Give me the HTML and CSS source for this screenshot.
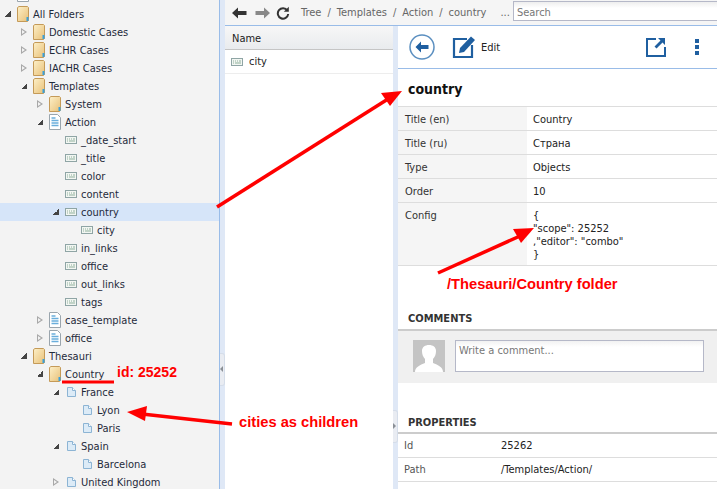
FILE: index.html
```html
<!DOCTYPE html>
<html lang="en">
<head>
    <meta charset="UTF-8">
    <title>Templates - country</title>
    <link rel="stylesheet" href="styles.css">
</head>
<body>
<svg class="defs" width="0" height="0">
    <defs>
        <linearGradient id="folderFill" x1="0" y1="0" x2="1" y2="1">
            <stop offset="0" stop-color="#fdf0c8"/>
            <stop offset="1" stop-color="#e8c078"/>
        </linearGradient>
        <symbol id="i-folder" viewBox="0 0 12 16">
            <path d="M.5 1.500 2 .5h8.500l1 1v13l-1 1H.5z" fill="url(#folderFill)" stroke="#c49a58"/>
            <path d="M10.500 11v4" stroke="#39a0dc" stroke-width="2"/>
        </symbol>
        <symbol id="i-form" viewBox="0 0 12 16">
            <path d="M.5.5h8l3 3v12H.5z" fill="#fff" stroke="#9aa5ad"/>
            <path d="M2.500 4h4M2.500 6.500h7M2.500 9h7M2.500 11.500h7" stroke="#6aaedc" stroke-width="1.400"/>
        </symbol>
        <symbol id="i-field" viewBox="0 0 12 8">
            <rect x=".5" y=".5" width="11" height="7" fill="#f2f6f2" stroke="#8fa5a5"/>
            <path d="M2 3h1M4 3h1M6 3h1M8 3h2M2 5h1M4 5h6" stroke="#8fb09c"/>
        </symbol>
        <symbol id="i-doc" viewBox="0 0 9 10">
            <path d="M.5.5h5l3 3v6H.5z" fill="#dcebf7" stroke="#8cb4d4"/>
            <path d="M5.500.5v3h3" fill="#fff" stroke="#8cb4d4"/>
        </symbol>
    </defs>
</svg>

<div class="app">
    <aside class="tree">
        <div class="row d0 cut"><span class="exp closed"></span><svg class="ico-form"><use href="#i-form"/></svg><span>Library</span></div>
        <div class="row d0"><span class="exp open"></span><svg class="ico-folder"><use href="#i-folder"/></svg><span>All Folders</span></div>
        <div class="row d1"><span class="exp closed"></span><svg class="ico-folder"><use href="#i-folder"/></svg><span>Domestic Cases</span></div>
        <div class="row d1"><span class="exp closed"></span><svg class="ico-folder"><use href="#i-folder"/></svg><span>ECHR Cases</span></div>
        <div class="row d1"><span class="exp closed"></span><svg class="ico-folder"><use href="#i-folder"/></svg><span>IACHR Cases</span></div>
        <div class="row d1"><span class="exp open"></span><svg class="ico-folder"><use href="#i-folder"/></svg><span>Templates</span></div>
        <div class="row d2"><span class="exp closed"></span><svg class="ico-folder"><use href="#i-folder"/></svg><span>System</span></div>
        <div class="row d2"><span class="exp open"></span><svg class="ico-form"><use href="#i-form"/></svg><span>Action</span></div>
        <div class="row d3"><span class="exp"></span><svg class="ico-field"><use href="#i-field"/></svg><span>_date_start</span></div>
        <div class="row d3"><span class="exp"></span><svg class="ico-field"><use href="#i-field"/></svg><span>_title</span></div>
        <div class="row d3"><span class="exp"></span><svg class="ico-field"><use href="#i-field"/></svg><span>color</span></div>
        <div class="row d3"><span class="exp"></span><svg class="ico-field"><use href="#i-field"/></svg><span>content</span></div>
        <div class="row d3 selected"><span class="exp open"></span><svg class="ico-field"><use href="#i-field"/></svg><span>country</span></div>
        <div class="row d4"><span class="exp"></span><svg class="ico-field"><use href="#i-field"/></svg><span>city</span></div>
        <div class="row d3"><span class="exp"></span><svg class="ico-field"><use href="#i-field"/></svg><span>in_links</span></div>
        <div class="row d3"><span class="exp"></span><svg class="ico-field"><use href="#i-field"/></svg><span>office</span></div>
        <div class="row d3"><span class="exp"></span><svg class="ico-field"><use href="#i-field"/></svg><span>out_links</span></div>
        <div class="row d3"><span class="exp"></span><svg class="ico-field"><use href="#i-field"/></svg><span>tags</span></div>
        <div class="row d2"><span class="exp closed"></span><svg class="ico-form"><use href="#i-form"/></svg><span>case_template</span></div>
        <div class="row d2"><span class="exp closed"></span><svg class="ico-form"><use href="#i-form"/></svg><span>office</span></div>
        <div class="row d1"><span class="exp open"></span><svg class="ico-folder"><use href="#i-folder"/></svg><span>Thesauri</span></div>
        <div class="row d2"><span class="exp open"></span><svg class="ico-folder"><use href="#i-folder"/></svg><span>Country</span></div>
        <div class="row d3"><span class="exp open"></span><svg class="ico-doc"><use href="#i-doc"/></svg><span>France</span></div>
        <div class="row d4"><span class="exp"></span><svg class="ico-doc"><use href="#i-doc"/></svg><span>Lyon</span></div>
        <div class="row d4"><span class="exp"></span><svg class="ico-doc"><use href="#i-doc"/></svg><span>Paris</span></div>
        <div class="row d3"><span class="exp open"></span><svg class="ico-doc"><use href="#i-doc"/></svg><span>Spain</span></div>
        <div class="row d4"><span class="exp"></span><svg class="ico-doc"><use href="#i-doc"/></svg><span>Barcelona</span></div>
        <div class="row d3"><span class="exp closed"></span><svg class="ico-doc"><use href="#i-doc"/></svg><span>United Kingdom</span></div>
    </aside>

    <div class="gutter"><span class="handle left"></span></div>

    <main class="main">
        <header class="toolbar">
            <svg class="nav" width="16" height="12" viewBox="0 0 16 12"><path d="M0 6 6 .5V4h8.500v4H6v3.500z" fill="#333"/></svg>
            <svg class="nav" width="16" height="12" viewBox="0 0 16 12"><path d="M16 6 10 .5V4H1.500v4H10v3.500z" fill="#888"/></svg>
            <svg class="nav" width="14" height="14" viewBox="0 0 14 14"><path d="M11.300 4.500A5.200 5.200 0 1 0 12.200 8" fill="none" stroke="#333" stroke-width="2"/><path d="M12.800.8v5h-5z" fill="#333"/></svg>
            <nav class="crumbs"><span>Tree</span><i>/</i><span>Templates</span><i>/</i><span>Action</span><i>/</i><span>country</span></nav>
            <span class="more">...</span>
            <div class="search">Search</div>
        </header>

        <div class="panes">
            <section class="grid">
                <div class="grid-head">Name</div>
                <div class="grid-row"><svg class="ico-field"><use href="#i-field"/></svg><span>city</span></div>
            </section>

            <div class="gutter small"><span class="handle right"></span></div>

            <section class="preview">
                <div class="preview-bar">
                    <svg width="26" height="26" viewBox="0 0 26 26"><circle cx="13" cy="13" r="12" fill="none" stroke="#5b8fc0" stroke-width="1.500"/><path d="M6.500 13 12 7.500V11h7.500v4H12v3.500z" fill="#1f5fa0"/></svg>
                    <svg class="edit-ico" width="24" height="24" viewBox="0 0 24 24"><path d="M15 4H2v18h18V10" fill="none" stroke="#1f5fa0" stroke-width="2.200"/><path d="M7 18l1-5L19 1.500l4 3.500L12 17z" fill="#1f5fa0"/></svg>
                    <span class="edit-label">Edit</span>
                    <svg class="open-ico" width="20" height="20" viewBox="0 0 20 20"><path d="M10 2H1v17h18v-9" fill="none" stroke="#1f5fa0" stroke-width="2"/><path d="M12 1h7v7l-2.500-2.500-6 6-2-2 6-6z" fill="#1f5fa0"/></svg>
                    <span class="dots"><b></b><b></b><b></b></span>
                </div>
                <h2 class="title">country</h2>
                <table class="fields">
                    <tr><th>Title (en)</th><td>Country</td></tr>
                    <tr><th>Title (ru)</th><td>Страна</td></tr>
                    <tr><th>Type</th><td>Objects</td></tr>
                    <tr><th>Order</th><td>10</td></tr>
                    <tr class="config"><th>Config</th><td>{<br>"scope": 25252<br>,"editor": "combo"<br>}</td></tr>
                </table>
                <h3 class="block-title comments-title">COMMENTS</h3>
                <div class="comment-box">
                    <svg class="avatar" width="32" height="32" viewBox="0 0 32 32"><rect width="32" height="32" fill="#c4c4c4"/><path d="M2 32c0-5 5-7 10-9v-4c-2-2-3-5-3-8 0-4 3-6 7-6s7 2 7 6c0 3-1 6-3 8v4c5 2 10 4 10 9z" fill="#fff"/></svg>
                    <div class="comment-input">Write a comment...</div>
                </div>
                <h3 class="block-title props-title">PROPERTIES</h3>
                <table class="props">
                    <tr><th>Id</th><td>25262</td></tr>
                    <tr><th>Path</th><td>/Templates/Action/</td></tr>
                    <tr><th>Created</th><td>Administrator</td></tr>
                </table>
            </section>
        </div>
    </main>
</div>

<!-- annotations drawn on top of the screenshot -->
<svg class="marks" width="717" height="489" viewBox="0 0 717 489">
    <g stroke="#f00" stroke-width="3.500" fill="#f00">
        <path d="M217 207 388 99"/>
        <path d="M402 91 381 93 390 106z" stroke="none"/>
        <path d="M438 273 520 236"/>
        <path d="M534 228 513 229 521 243z" stroke="none"/>
        <path d="M142 414 232 424"/>
        <path d="M127 412 147 406 145 421z" stroke="none"/>
        <path d="M62 382H114" stroke-width="3"/>
    </g>
</svg>
<span class="note note-id">id: 25252</span>
<span class="note note-folder">/Thesauri/Country folder</span>
<span class="note note-cities">cities as children</span>
</body>
</html>
```

FILE: styles.css
```css
* {
    box-sizing: border-box;
}
html, body {
    margin: 0;
    height: 489px;
    overflow: hidden;
}
body {
    font-family: "DejaVu Sans Condensed", "DejaVu Sans", sans-serif;
    font-stretch: condensed;
    font-size: 11px;
    color: #222;
    background: #fff;
}
.defs {
    position: absolute;
}
.app {
    display: flex;
    height: 489px;
}

/* left tree */
.tree {
    width: 219px;
    flex: none;
    height: 489px;
    overflow: hidden;
    background: #f3f3f3;
    padding-top: 5px;
    color: #1f2a3a;
}
.row {
    display: flex;
    align-items: center;
    height: 18px;
    white-space: nowrap;
}
.cut {
    margin-top: -20px;
    margin-bottom: 2px;
}
.selected {
    background: #d6e5f9;
}
.d0 { padding-left: 5px; }
.d1 { padding-left: 21px; }
.d2 { padding-left: 37px; }
.d3 { padding-left: 53px; }
.d4 { padding-left: 69px; }
.exp {
    width: 12px;
    height: 8px;
    flex: none;
}
.exp.open {
    background: linear-gradient(135deg, transparent 50%, #444 50%) 0 1px / 6px 6px no-repeat;
}
.exp.closed {
    position: relative;
    background: none;
}
.exp.closed::before {
    content: "";
    position: absolute;
    left: 0;
    top: 0;
    border-left: 6px solid #a8a8a8;
    border-top: 4px solid transparent;
    border-bottom: 4px solid transparent;
}
.exp.closed::after {
    content: "";
    position: absolute;
    left: 1px;
    top: 2px;
    border-left: 3px solid #f3f3f3;
    border-top: 2px solid transparent;
    border-bottom: 2px solid transparent;
}
.ico-folder, .ico-form {
    width: 12px;
    height: 16px;
    margin-right: 4px;
    flex: none;
}
.ico-field {
    width: 12px;
    height: 8px;
    margin-right: 4px;
    flex: none;
}
.ico-doc {
    width: 9px;
    height: 10px;
    margin: 0 5px 0 2px;
    flex: none;
}

/* splitters */
.gutter {
    width: 6px;
    flex: none;
    background: #dfe8f6;
    border-left: 1px solid #99bce8;
    position: relative;
}
.gutter.small {
    width: 5px;
    border-left: 0;
}
.handle {
    position: absolute;
    left: 0;
    width: 5px;
    height: 33px;
    background: #e9ecf2;
    border: 1px solid #d5dde9;
    border-width: 1px 1px 1px 0;
    border-radius: 0 3px 3px 0;
}
.handle::after {
    content: "";
    position: absolute;
    top: 12px;
    border-top: 3px solid transparent;
    border-bottom: 3px solid transparent;
}
.handle.left {
    top: 353px;
}
.handle.left::after {
    left: 0;
    border-right: 3px solid #8a8f96;
}
.handle.right {
    top: 384px;
}
.handle.right::after {
    left: 0;
    border-left: 3px solid #8a8f96;
}

/* main area */
.main {
    flex: 1;
    min-width: 0;
    display: flex;
    flex-direction: column;
}
.toolbar {
    height: 26px;
    flex: none;
    display: flex;
    align-items: center;
    background: #f5f5f5;
    border-bottom: 1px solid #99bce8;
    padding-left: 7px;
}
.nav {
    margin-right: 6px;
    flex: none;
}
.crumbs {
    display: flex;
    margin-left: 5px;
    color: #666;
}
.crumbs i {
    font-style: normal;
    margin: 0 6px;
}
.more {
    margin-left: 14px;
    color: #666;
}
.search {
    margin-left: 3px;
    align-self: flex-start;
    margin-top: 1px;
    flex: 1;
    height: 20px;
    line-height: 19px;
    padding: 1px 0 0 3px;
    color: #777;
    background: linear-gradient(#eee, #fff 6px);
    border: 1px solid #b5b8c8;
    border-right: 0;
}
.panes {
    flex: 1;
    min-height: 0;
    display: flex;
}
.grid {
    width: 168px;
    flex: none;
}
.grid-head {
    height: 24px;
    line-height: 25px;
    padding-left: 7px;
    background: linear-gradient(#f7f7f7, #e9ebee);
    border-bottom: 1px solid #c5c5c5;
}
.grid-row {
    display: flex;
    align-items: center;
    height: 24px;
    padding-left: 6px;
    border-bottom: 1px solid #ededed;
}
.grid-row .ico-field {
    margin-right: 6px;
}

/* right preview */
.preview {
    flex: 1;
    min-width: 0;
    overflow: hidden;
}
.preview-bar {
    display: flex;
    align-items: center;
    height: 43px;
    padding: 0 18px 0 11px;
    border-bottom: 1px solid #99bce8;
}
.edit-ico {
    margin-left: 17px;
}
.edit-label {
    margin-left: 5px;
}
.open-ico {
    margin-left: auto;
}
.dots {
    display: flex;
    flex-direction: column;
    gap: 2px;
    margin-left: 29px;
}
.dots b {
    width: 4px;
    height: 4px;
    background: #1f5fa0;
}
.title {
    margin: 0;
    height: 37px;
    padding-left: 10px;
    font-size: 14px;
    line-height: 40px;
    font-weight: bold;
    color: #111;
}
table {
    border-collapse: collapse;
    width: 100%;
    table-layout: fixed;
}
th {
    font-weight: normal;
    text-align: left;
    vertical-align: top;
}
.fields {
    border-top: 1px solid #ddd;
}
.fields tr {
    height: 24px;
    border-bottom: 1px solid #ddd;
}
.fields th {
    width: 129px;
    padding: 6px 6px 4px 7px;
    background: #f5f5f5;
    color: #333;
}
.fields td {
    padding: 6px 6px 4px;
    vertical-align: top;
}
.config td {
    line-height: 13px;
    padding-bottom: 4px;
}
.block-title {
    margin: 0;
    padding-left: 10px;
    font-size: 11px;
    line-height: 16px;
    font-weight: bold;
    color: #333;
}
.comments-title {
    margin-top: 45px;
}
.comment-box {
    display: flex;
    gap: 10px;
    height: 54px;
    margin-top: 2px;
    padding: 9px 13px 0 15px;
    background: #f0f0f0;
    border-top: 2px solid #ccc;
}
.avatar {
    flex: none;
}
.comment-input {
    flex: 1;
    height: 32px;
    padding: 3px 3px 0;
    color: #777;
    background: linear-gradient(#f2f2f2, #fff 6px);
    border: 1px solid #b5b8c8;
}
.props-title {
    margin-top: 32px;
}
.props {
    margin-top: 1px;
    border-top: 2px solid #ccc;
}
.props tr {
    height: 24px;
    border-bottom: 1px solid #ddd;
}
.props th {
    width: 103px;
    padding: 5px 6px;
    color: #555;
}
.props td {
    padding: 5px 0;
    vertical-align: top;
}

/* red annotations */
.marks {
    position: absolute;
    left: 0;
    top: 0;
}
.note {
    position: absolute;
    font-family: "Liberation Sans", Arial, sans-serif;
    font-stretch: normal;
    font-size: 14.700px;
    line-height: 16px;
    font-weight: bold;
    color: #f00;
    white-space: nowrap;
}
.note-id {
    left: 117px;
    top: 364px;
    font-size: 14px;
}
.note-folder {
    left: 447px;
    top: 276px;
}
.note-cities {
    left: 239px;
    top: 414px;
}
```
